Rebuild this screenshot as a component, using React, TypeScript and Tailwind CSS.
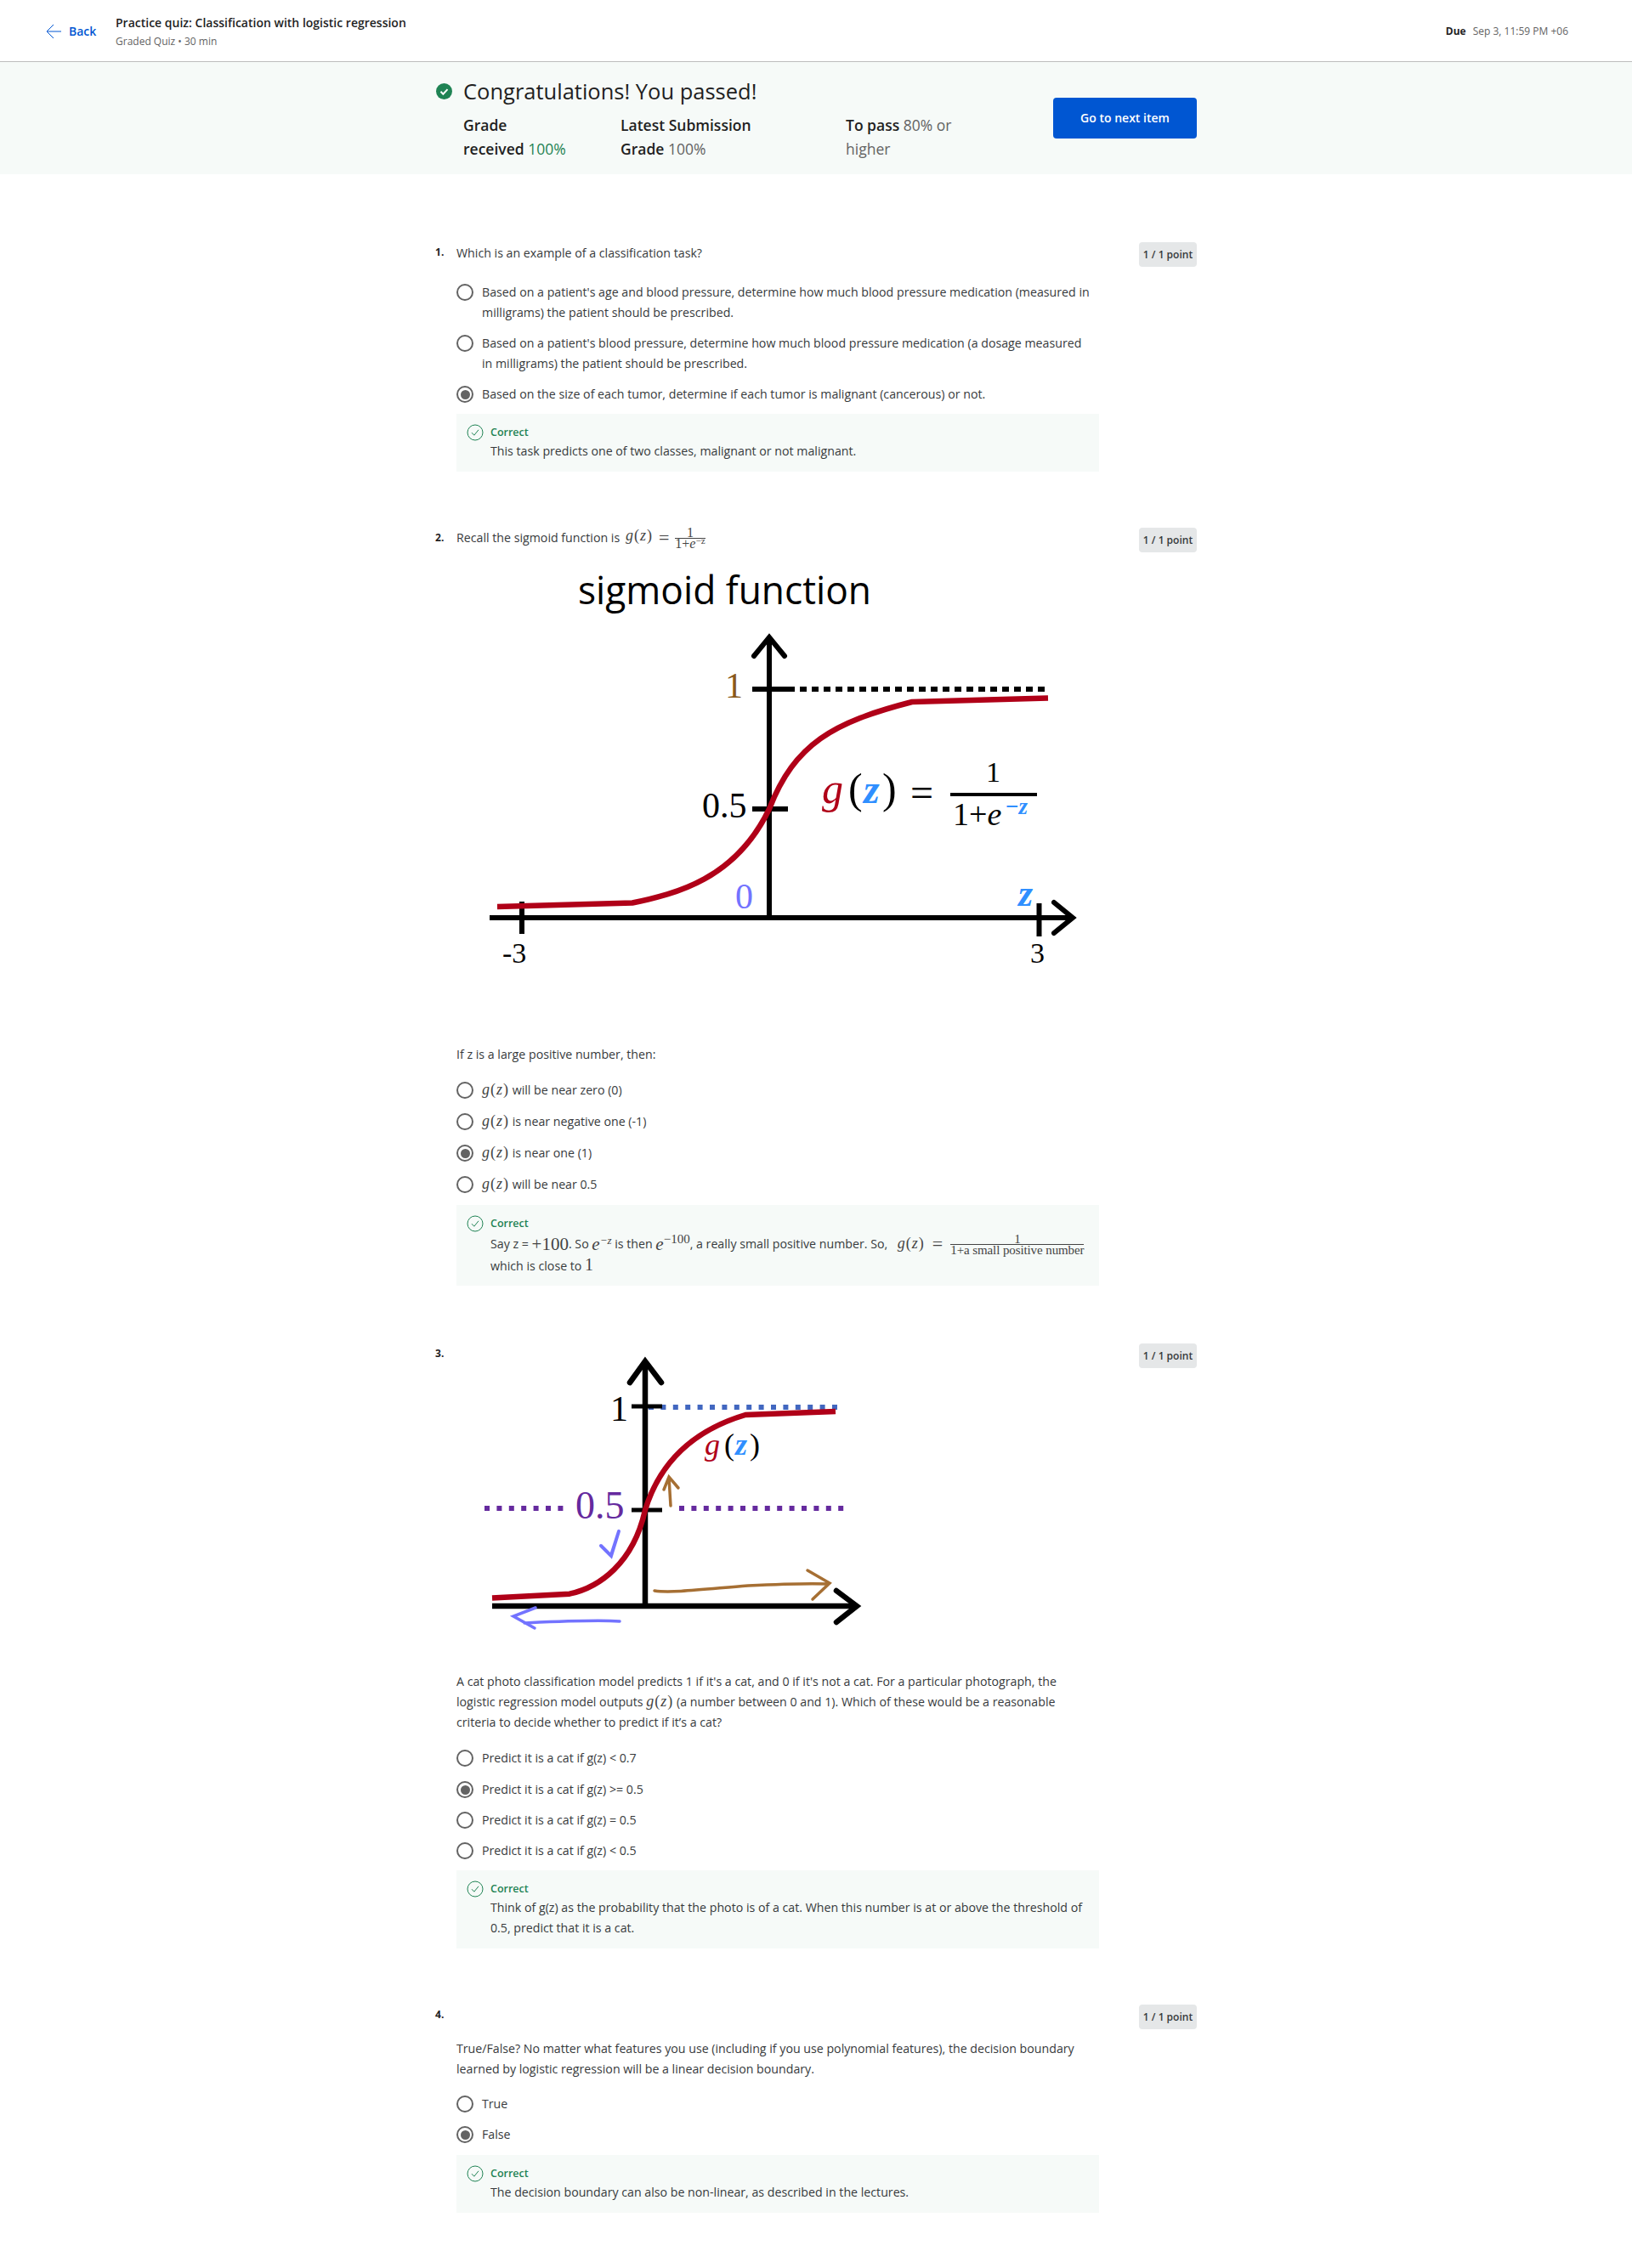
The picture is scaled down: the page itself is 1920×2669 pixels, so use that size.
import React from "react";

const serif = "font-['Liberation_Serif',serif]";

const Radio = ({ on }: { on?: boolean }) => (
  <span className="mt-[2px] flex h-[20px] w-[20px] shrink-0 items-center justify-center rounded-full border-2 border-[#636363] bg-white">
    {on && <span className="h-[11px] w-[11px] rounded-full bg-[#636363]" />}
  </span>
);

const Option = ({ on, className, children }: { on?: boolean; className?: string; children: React.ReactNode }) => (
  <div className={"flex gap-[10px] pr-[7px] " + (className || "")}>
    <Radio on={on} />
    <div className="min-w-0 flex-1">{children}</div>
  </div>
);

const CheckCircle = () => (
  <svg width="20" height="20" viewBox="0 0 20 20" fill="none" className="shrink-0">
    <circle cx="10" cy="10" r="9" stroke="#1f8354" strokeWidth="1" />
    <path d="M6 10.2l2.8 3L14 6.8" stroke="#1f8354" strokeWidth="1" />
  </svg>
);

const Feedback = ({ className, children }: { className?: string; children: React.ReactNode }) => (
  <div className={"flex w-[756px] gap-[8px] bg-[#f6faf8] px-[12px] pt-[12px] " + (className || "pb-[12px]")}>
    <CheckCircle />
    <div className="min-w-0 flex-1">
      <div className="text-[12.5px] font-semibold leading-[20px] text-[#1f8354]">Correct</div>
      {children}
    </div>
  </div>
);

const Badge = () => (
  <div className="flex h-[29px] w-[68px] shrink-0 items-center justify-center rounded-[4px] bg-[#e5e7e8] text-[12px] font-semibold text-[#373a3c]">
    1 / 1 point
  </div>
);

const Question = ({ n, className, children }: { n: number; className?: string; children: React.ReactNode }) => (
  <section className={"flex w-[896px] " + (className || "")}>
    <div className="w-[25px] shrink-0 text-[12px] font-bold leading-[24px] text-[#1f1f1f]">{n}.</div>
    <div className="w-[756px] shrink-0">{children}</div>
    <div className="ml-auto">
      <Badge />
    </div>
  </section>
);

const Gz = () => (
  <span className={serif + " text-[18px] italic leading-none tracking-[1px] text-[#444]"}>
    g<span className="not-italic">(</span>z<span className="not-italic">)</span>
  </span>
);

const Frac = ({ top, bottom, className }: { top: React.ReactNode; bottom: React.ReactNode; className?: string }) => (
  <span className={"inline-flex flex-col items-center align-middle text-[#444] " + serif + " " + (className || "")}>
    <span className="w-full border-b border-[#444] text-center leading-[12px]">{top}</span>
    <span className="leading-[12px]">{bottom}</span>
  </span>
);

const SigmoidChart = () => (
  <svg width="755" height="579" viewBox="537 650 755 579" className="block">
    <text x="680" y="711" fontFamily="'Open Sans', sans-serif" fontSize="45" fill="#000" textLength="345" lengthAdjust="spacingAndGlyphs">sigmoid function</text>
    <path d="M927 811H1233" stroke="#000" strokeWidth="6" strokeDasharray="8 6" />
    <path d="M885 811H927M885 952H927" stroke="#000" strokeWidth="6" />
    <path d="M905 752V1080M576 1080H1262M614 1061V1099M1222.5 1063V1102" stroke="#000" strokeWidth="6" />
    <path d="M887 772L905 750L923 772M1240 1062L1262 1080L1240 1098" stroke="#000" strokeWidth="6" fill="none" strokeLinecap="round" />
    <path d="M585 1067L744 1062.500C795 1052 865 1035 905 952C935 875 980 850 1073 826L1233 821.500" stroke="#b00018" strokeWidth="6.500" fill="none" />
    <g fontFamily="'Liberation Serif', serif" fontSize="42">
      <text x="853" y="821" fill="#8a5a1c">1</text>
      <text x="826" y="962" fill="#000">0.5</text>
      <text x="865" y="1069" fill="#7373ff">0</text>
      <text x="591" y="1133" fill="#000" fontSize="34">-3</text>
      <text x="1212" y="1133" fill="#000" fontSize="34">3</text>
      <text x="1198" y="1066" fill="#2f8fff" fontStyle="italic" fontWeight="bold" fontSize="44">z</text>
      <text x="967" y="945" fill="#b00018" fontStyle="italic" fontSize="50">g</text>
      <text x="998" y="945" fill="#000" fontSize="50">(</text>
      <text x="1016" y="945" fill="#2f8fff" fontStyle="italic" fontWeight="bold" fontSize="48">z</text>
      <text x="1038" y="945" fill="#000" fontSize="50">)</text>
      <text x="1071" y="949" fill="#000" fontSize="48">=</text>
      <text x="1160" y="920" fill="#000" fontSize="34">1</text>
      <text x="1121" y="971" fill="#000" fontSize="38">1+<tspan fontStyle="italic">e</tspan></text>
      <text x="1183" y="958" fill="#2f8fff" fontSize="27" fontWeight="bold">−<tspan fontStyle="italic">z</tspan></text>
    </g>
    <path d="M1118 935H1220" stroke="#000" strokeWidth="4" />
  </svg>
);

const ThresholdChart = () => (
  <svg width="755" height="386" viewBox="537 1581 755 386" className="block">
    <path d="M763 1656H987" stroke="#4267c0" strokeWidth="6" strokeDasharray="6 8.400" />
    <path d="M570 1775H663M799 1775H995" stroke="#652a9e" strokeWidth="6" strokeDasharray="6 8.400" />
    <path d="M743 1655H779M743 1777H779" stroke="#000" strokeWidth="5" />
    <path d="M759 1604V1890M579 1890H1006" stroke="#000" strokeWidth="6.500" />
    <path d="M741 1627L759 1602L778 1627M984 1872L1008 1890L984 1909" stroke="#000" strokeWidth="6.500" fill="none" strokeLinecap="round" />
    <path d="M579 1880.500L670 1875.700C705 1868 745 1840 759 1777C775 1725 810 1685 877 1665L983 1661" stroke="#b00018" strokeWidth="6.500" fill="none" />
    <g fontFamily="'Liberation Serif', serif">
      <text x="718" y="1672" fill="#000" fontSize="42">1</text>
      <text x="677" y="1787" fill="#652a9e" fontSize="46">0.5</text>
      <text x="829" y="1712" fill="#b00018" fontSize="36" fontStyle="italic">g</text>
      <text x="852" y="1712" fill="#000" fontSize="36">(</text>
      <text x="865" y="1712" fill="#2f8fff" fontSize="36" fontStyle="italic" fontWeight="bold">z</text>
      <text x="882" y="1712" fill="#000" fontSize="36">)</text>
    </g>
    <path d="M789 1772L787 1739M781 1753L787 1738L798 1751" stroke="#a66f33" strokeWidth="3.500" fill="none" strokeLinecap="round" />
    <path d="M770 1872C790 1875 830 1870 880 1866C920 1864 950 1863 975 1864M950 1848L976 1863L956 1882" stroke="#a66f33" strokeWidth="3.500" fill="none" strokeLinecap="round" />
    <path d="M728 1802L719 1830M707 1819L719 1831L728 1802" stroke="#7373ff" strokeWidth="4" fill="none" strokeLinecap="round" />
    <path d="M729 1908C700 1906 660 1908 617 1910M630 1892L604 1902L629 1916" stroke="#7373ff" strokeWidth="3.500" fill="none" strokeLinecap="round" />
  </svg>
);

export default function App() {
  return (
    <div className="min-h-[2669px] bg-white font-['Open_Sans',sans-serif] text-[14.2px] leading-[24px] text-[#373a3c]">
      <header className="flex h-[73px] items-center justify-between border-b border-[#bdbdbd] pl-[54px] pr-[75px] pt-[2px]">
        <div className="flex items-center">
          <a className="flex w-[82px] items-center gap-[9px] text-[14px] font-semibold text-[#0056d2]">
            <svg width="18" height="18" viewBox="0 0 18 18" fill="none">
              <path d="M18 9H1M9 1L1 9l8 8" stroke="#0056d2" strokeWidth="1" />
            </svg>
            Back
          </a>
          <div>
            <div className="text-[14px] font-semibold leading-[20px] text-[#1f1f1f]">Practice quiz: Classification with logistic regression</div>
            <div className="mt-[3px] text-[12px] leading-[18px] text-[#636363]">Graded Quiz • 30 min</div>
          </div>
        </div>
        <div className="text-[12px] text-[#636363]">
          <span className="mr-[8px] font-bold text-[#1f1f1f]">Due</span>Sep 3, 11:59 PM +06
        </div>
      </header>

      <div className="h-[132px] bg-[#f6faf8]">
        <div className="mx-auto flex w-[896px] items-start justify-between">
          <div className="pt-[16px]">
            <div className="flex items-center gap-[13px] pl-px">
              <svg width="19" height="19" viewBox="0 0 19 19">
                <circle cx="9.500" cy="9.500" r="9.500" fill="#1f8354" />
                <path d="M5.500 9.800l2.800 2.900 5.200-5.600" fill="none" stroke="#fff" strokeWidth="2" />
              </svg>
              <h1 className="text-[25.5px] font-medium leading-[36px] text-[#1f1f1f]">Congratulations! You passed!</h1>
            </div>
            <div className="mt-[8px] flex pl-[33px] text-[17.5px] leading-[28px]">
              <div className="w-[185px] font-semibold text-[#1f1f1f]">
                Grade<br />received <span className="font-normal text-[#1f8354]">100%</span>
              </div>
              <div className="w-[265px] font-semibold text-[#1f1f1f]">
                Latest Submission<br />Grade <span className="font-normal text-[#636363]">100%</span>
              </div>
              <div className="text-[#636363]">
                <span className="font-semibold text-[#1f1f1f]">To pass</span> 80% or<br />higher
              </div>
            </div>
          </div>
          <button className="mt-[42px] h-[48px] w-[169px] rounded-[4px] bg-[#0056d2] text-[14px] font-semibold text-white">Go to next item</button>
        </div>
      </div>

      <main className="mx-auto w-[896px] pt-[80px]">
        <Question n={1}>
          <div className="pt-px">Which is an example of a classification task?</div>
          <Option className="mt-[22px]">Based on a patient's age and blood pressure, determine how much blood pressure medication (measured in milligrams) the patient should be prescribed.</Option>
          <Option className="mt-[12px]">Based on a patient's blood pressure, determine how much blood pressure medication (a dosage measured in milligrams) the patient should be prescribed.</Option>
          <Option on className="mt-[12px]">Based on the size of each tumor, determine if each tumor is malignant (cancerous) or not.</Option>
          <div className="mt-[11px]">
            <Feedback>This task predicts one of two classes, malignant or not malignant.</Feedback>
          </div>
        </Question>

        <Question n={2} className="mt-[66px]">
          <div className="flex h-[29px] items-start">
            <span className="mr-[3px]">Recall the sigmoid function is&nbsp;</span>
            <Gz />
            <span className={serif + " mx-[7px] text-[22px] leading-[24px] text-[#444]"}>=</span>
            <Frac className="text-[16px]" top="1" bottom={<>1+<i>e</i><sup className="text-[11px] leading-none">−z</sup></>} />
          </div>
          <SigmoidChart />
          <div>If z is a large positive number, then:</div>
          <Option className="mt-[18px]"><Gz /> will be near zero (0)</Option>
          <Option className="mt-[13px]"><Gz /> is near negative one (-1)</Option>
          <Option on className="mt-[13px]"><Gz /> is near one (1)</Option>
          <Option className="mt-[13px]"><Gz /> will be near 0.5</Option>
          <div className="mt-[12px]">
            <Feedback className="pb-[11px]">
              <div className="flex h-[28px] items-center whitespace-nowrap">
                Say z =&nbsp;<span className={serif + " text-[21px] leading-none text-[#444]"}>+100</span>. So&nbsp;
                <span className={serif + " text-[21px] italic leading-none text-[#444]"}>e<sup className="text-[13px]">−z</sup></span>&nbsp;is then&nbsp;
                <span className={serif + " text-[21px] italic leading-none text-[#444]"}>e<sup className="text-[15px] not-italic">−100</sup></span>, a really small positive number. So,&nbsp;
                <span className="ml-[8px]"><Gz /></span>
                <span className={serif + " mx-[9px] text-[22px] leading-none text-[#444]"}>=</span>
                <Frac className="text-[15px] tracking-[-0.1px]" top="1" bottom="1+a small positive number" />
              </div>
              <div>which is close to <span className={serif + " text-[20px] leading-none text-[#444]"}>1</span></div>
            </Feedback>
          </div>
        </Question>

        <Question n={3} className="mt-[68px]">
          <ThresholdChart />
          <div className="pr-[10px]">
            A cat photo classification model predicts 1 if it's a cat, and 0 if it's not a cat. For a particular photograph, the logistic regression model outputs <Gz /> (a number between 0 and 1). Which of these would be a reasonable criteria to decide whether to predict if it’s a cat?
          </div>
          <Option className="mt-[18px]">Predict it is a cat if g(z) &lt; 0.7</Option>
          <Option on className="mt-[13px]">Predict it is a cat if g(z) &gt;= 0.5</Option>
          <Option className="mt-[12px]">Predict it is a cat if g(z) = 0.5</Option>
          <Option className="mt-[12px]">Predict it is a cat if g(z) &lt; 0.5</Option>
          <div className="mt-[11px]">
            <Feedback>Think of g(z) as the probability that the photo is of a cat. When this number is at or above the threshold of 0.5, predict that it is a cat.</Feedback>
          </div>
        </Question>

        <Question n={4} className="mt-[66px]">
          <div className="pt-[40px]">True/False? No matter what features you use (including if you use polynomial features), the decision boundary learned by logistic regression will be a linear decision boundary.</div>
          <Option className="mt-[17px]">True</Option>
          <Option on className="mt-[12px]">False</Option>
          <div className="mt-[12px]">
            <Feedback>The decision boundary can also be non-linear, as described in the lectures.</Feedback>
          </div>
        </Question>
      </main>
    </div>
  );
}
